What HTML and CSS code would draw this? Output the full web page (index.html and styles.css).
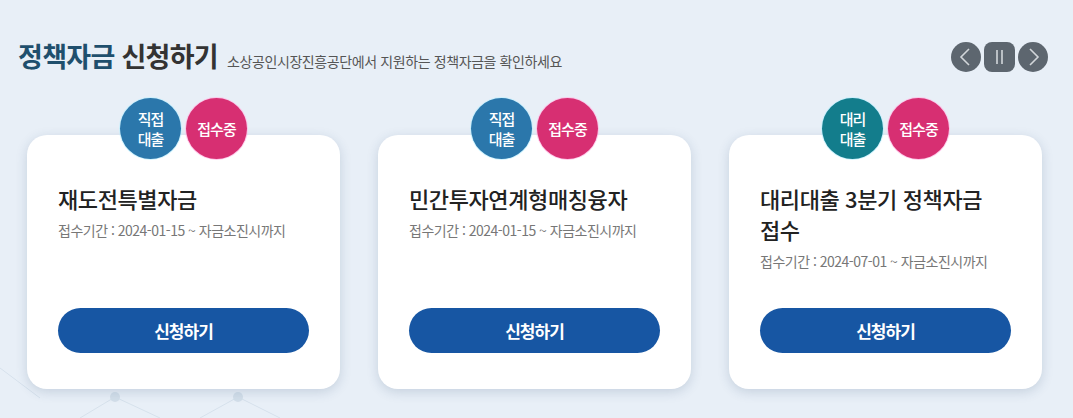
FILE: index.html
```html
<!DOCTYPE html>
<html lang="ko">
<head>
<meta charset="utf-8">
<link rel="stylesheet" href="styles.css">
</head>
<body>
<div class="page">
  <svg class="bg-net" width="1073" height="60" viewBox="0 0 1073 60" aria-hidden="true">
    <g stroke="#d6e1ec" stroke-width="1" fill="none">
      <path d="M0 10 L40 40"/>
      <path d="M80 60 L115 39 L160 60"/>
      <path d="M200 60 L238 39 L280 60"/>
    </g>
    <g fill="#d3dfea">
      <circle cx="115" cy="39" r="5"/>
      <circle cx="238" cy="39" r="5"/>
    </g>
  </svg>
  <header class="head">
    <div class="title-group">
      <h2 class="title"><span class="title-accent">정책자금</span> 신청하기</h2>
      <p class="subtitle">소상공인시장진흥공단에서 지원하는 정책자금을 확인하세요</p>
    </div>
    <div class="nav">
      <button class="nav-btn round" aria-label="이전">
        <svg width="30" height="30" viewBox="0 0 30 30"><path d="M18 7 L10 15 L18 23" fill="none" stroke="#d2d6da" stroke-width="1.6"/></svg>
      </button>
      <button class="nav-btn square" aria-label="정지">
        <svg width="31" height="30" viewBox="0 0 31 30"><path d="M13 8 V22 M18 8 V22" fill="none" stroke="#d2d6da" stroke-width="1.6"/></svg>
      </button>
      <button class="nav-btn round" aria-label="다음">
        <svg width="30" height="30" viewBox="0 0 30 30"><path d="M12 7 L20 15 L12 23" fill="none" stroke="#d2d6da" stroke-width="1.6"/></svg>
      </button>
    </div>
  </header>

  <div class="cards">
    <div class="card">
      <div class="badges">
        <span class="badge blue">직접<br>대출</span>
        <span class="badge pink">접수중</span>
      </div>
      <h3 class="card-title">재도전특별자금</h3>
      <p class="card-date">접수기간 : 2024-01-15 ~ 자금소진시까지</p>
      <a class="apply" href="#">신청하기</a>
    </div>
    <div class="card">
      <div class="badges">
        <span class="badge blue">직접<br>대출</span>
        <span class="badge pink">접수중</span>
      </div>
      <h3 class="card-title">민간투자연계형매칭융자</h3>
      <p class="card-date">접수기간 : 2024-01-15 ~ 자금소진시까지</p>
      <a class="apply" href="#">신청하기</a>
    </div>
    <div class="card">
      <div class="badges">
        <span class="badge teal">대리<br>대출</span>
        <span class="badge pink">접수중</span>
      </div>
      <h3 class="card-title">대리대출 3분기 정책자금 접수</h3>
      <p class="card-date">접수기간 : 2024-07-01 ~ 자금소진시까지</p>
      <a class="apply" href="#">신청하기</a>
    </div>
  </div>
</div>
</body>
</html>
```

FILE: styles.css
```css
* { box-sizing: border-box; }
html, body {
  margin: 0;
  padding: 0;
  background: #e8eff7;
  font-family: "Noto Sans CJK KR", "Noto Sans", sans-serif;
  width: 1073px;
  height: 418px;
  overflow: hidden;
}
.page {
  position: relative;
  height: 418px;
  padding-top: 35px;
}
.bg-net {
  position: absolute;
  left: 0;
  bottom: 0;
  z-index: 0;
}
.head {
  position: relative;
  z-index: 1;
  display: flex;
  align-items: center;
  justify-content: space-between;
  padding: 0 25px 0 18px;
  height: 42px;
}
.title-group {
  display: flex;
  align-items: baseline;
  gap: 9px;
}
.title {
  margin: 0;
  font-size: 27px;
  line-height: 34px;
  font-weight: 700;
  letter-spacing: -0.7px;
  color: #333;
}
.title-accent { color: #1f4f6d; }
.subtitle {
  margin: 0;
  font-size: 14px;
  letter-spacing: -0.4px;
  color: #555;
}
.nav {
  display: flex;
  gap: 3px;
  margin-top: 1px;
}
.nav-btn {
  border: 0;
  padding: 0;
  margin: 0;
  height: 30px;
  background: #5d666f;
  display: flex;
  align-items: center;
  justify-content: center;
  cursor: pointer;
}
.nav-btn.round { width: 30px; border-radius: 50%; }
.nav-btn.square { width: 31px; border-radius: 8px; }

.cards {
  position: relative;
  z-index: 1;
  display: flex;
  gap: 38px;
  padding-left: 27px;
  margin-top: 58px;
}
.card {
  position: relative;
  width: 313px;
  height: 254px;
  background: #fff;
  border-radius: 20px;
  box-shadow: 0 3px 12px rgba(40, 70, 110, 0.18);
  padding: 48px 31px 36px 31px;
  display: flex;
  flex-direction: column;
}
.badges {
  position: absolute;
  top: -37px;
  left: 0;
  right: 0;
  display: flex;
  justify-content: center;
  gap: 5px;
}
.badge {
  width: 61px;
  height: 61px;
  border-radius: 50%;
  display: flex;
  align-items: center;
  justify-content: center;
  text-align: center;
  color: #fff;
  font-size: 15px;
  line-height: 20px;
  font-weight: 500;
  letter-spacing: -1px;
  box-shadow: 0 0 0 1px rgba(190, 240, 255, 0.7);
}
.badge.blue { background: #2b77ab; }
.badge.teal { background: #137d8c; }
.badge.pink { background: #d72f72; box-shadow: 0 0 0 1px rgba(255, 190, 230, 0.8); }

.card-title {
  margin: 0;
  font-size: 22px;
  line-height: 31px;
  font-weight: 500;
  letter-spacing: -0.4px;
  color: #222;
  word-break: keep-all;
}
.card-date {
  margin: 6px 0 0 0;
  font-size: 14px;
  line-height: 20px;
  letter-spacing: -0.5px;
  color: #777;
}
.apply {
  margin-top: auto;
  display: flex;
  align-items: center;
  justify-content: center;
  height: 45px;
  border-radius: 23px;
  background: #1756a3;
  color: #fff;
  text-decoration: none;
  font-size: 17px;
  font-weight: 700;
  letter-spacing: -1px;
}
```
